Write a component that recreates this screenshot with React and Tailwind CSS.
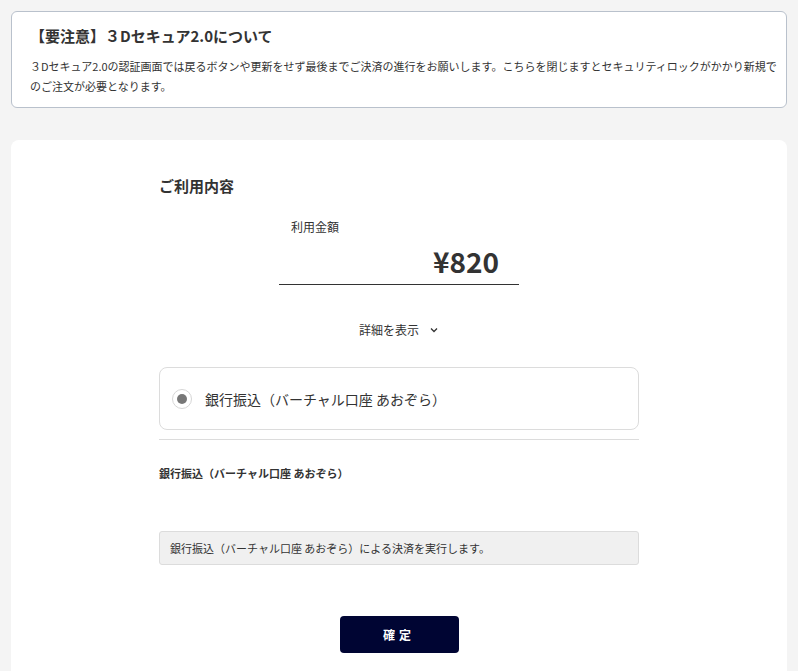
import React from "react";

const font = { fontFamily: '"Noto Sans CJK JP", "Noto Sans", sans-serif' };

export default function App() {
  return (
    <div className="min-h-screen bg-[#f4f4f4] px-[11px] pt-[11px] text-[#333]" style={font}>
      {/* notice */}
      <div className="rounded-[6px] border border-[#b9c1cc] bg-white pl-[18px] pr-[8px] pt-[12px] pb-[11px]">
        <h2 className="text-[15px] font-bold leading-[24px] text-[#333]">【要注意】３Dセキュア2.0について</h2>
        <p className="mt-[8px] text-[11px] leading-[20px] text-[#333]">
          ３Dセキュア2.0の認証画面では戻るボタンや更新をせず最後までご決済の進行をお願いします。こちらを閉じますとセキュリティロックがかかり新規でのご注文が必要となります。
        </p>
      </div>

      {/* main card */}
      <div className="mt-[32px] rounded-t-[8px] bg-white pt-[34px] pb-[20px]">
        <div className="mx-auto w-[480px]">
          <h3 className="text-[15px] font-bold leading-[24px]">ご利用内容</h3>

          <div className="mx-auto mt-[20px] w-[240px]">
            <div className="pl-[12px] text-[12px] leading-[18px]">利用金額</div>
            <div className="mt-[7px] border-b border-[#333] pr-[20px] pb-[5px] text-right text-[28px] font-semibold leading-[36px] text-[#333]">
              ¥820
            </div>
          </div>

          <div className="mt-[36px] flex items-center justify-center gap-[10px] text-[12px] leading-[18px]">
            <span>詳細を表示</span>
            <svg width="10" height="10" viewBox="0 0 10 10" fill="none" stroke="#333" strokeWidth="1.3">
              <path d="M2 3.5 L5 6.5 L8 3.5" />
            </svg>
          </div>

          <div className="mt-[28px] flex h-[63px] items-center rounded-[8px] border border-[#dcdcdc] pl-[12px]">
            <span className="flex h-[20px] w-[20px] items-center justify-center rounded-full border border-[#d6d6d6]">
              <span className="h-[10px] w-[10px] rounded-full bg-[#777]" />
            </span>
            <span className="ml-[13px] text-[14px] leading-[20px] text-[#333]">銀行振込（バーチャル口座 あおぞら）</span>
          </div>

          <div className="mt-[9px] border-t border-[#dcdcdc]" />

          <div className="mt-[24px] text-[11px] font-bold leading-[18px]">銀行振込（バーチャル口座 あおぞら）</div>

          <div className="mt-[49px] flex h-[34px] items-center rounded-[3px] border border-[#dcdcdc] bg-[#f0f0f0] pl-[10px] text-[11px] text-[#333]">
            銀行振込（バーチャル口座 あおぞら）による決済を実行します。
          </div>

          <div className="mt-[51px] flex justify-center">
            <button className="h-[37px] w-[119px] rounded-[4px] bg-[#000533] text-[12px] font-bold tracking-[4px] text-white">
              確定
            </button>
          </div>
        </div>
      </div>
    </div>
  );
}
